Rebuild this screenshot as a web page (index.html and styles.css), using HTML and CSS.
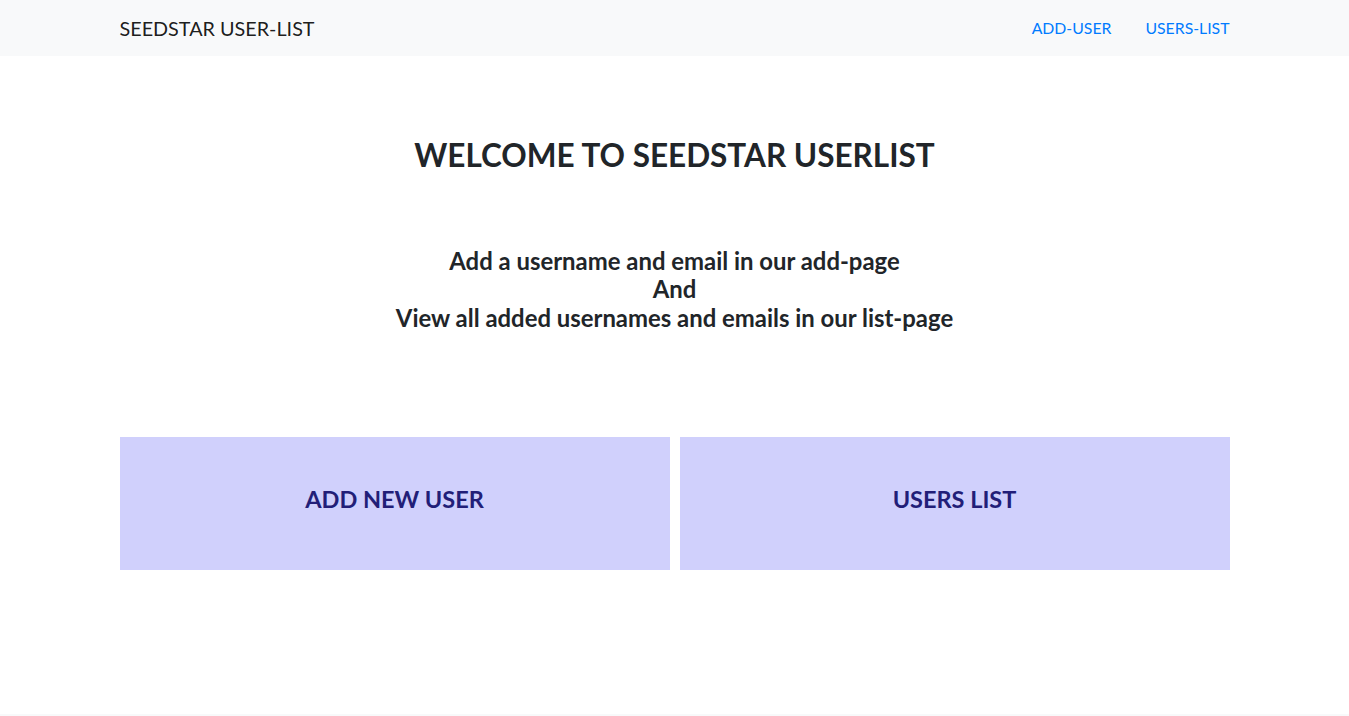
FILE: index.html
```html
<!DOCTYPE html>
<html>
<head>
<meta charset="utf-8">
<title>Seedstar User-List</title>
<link rel="stylesheet" href="styles.css">
</head>
<body>
<nav class="navbar">
  <div class="container nav-inner">
    <a class="brand" href="#">SEEDSTAR USER-LIST</a>
    <div class="nav-links">
      <a class="nav-link" href="#">ADD-USER</a>
      <a class="nav-link" href="#">USERS-LIST</a>
    </div>
  </div>
</nav>
<main class="container main">
  <h1 class="title">WELCOME TO SEEDSTAR USERLIST</h1>
  <h4 class="intro">Add a username and email in our add-page<br>And<br>View all added usernames and emails in our list-page</h4>
  <div class="cards">
    <a class="card" href="#">ADD NEW USER</a>
    <a class="card" href="#">USERS LIST</a>
  </div>
</main>
<footer class="footer"></footer>
</body>
</html>
```
FILE: styles.css
```css
* { box-sizing: border-box; }
html, body { margin: 0; padding: 0; }
body {
  font-family: Lato, "Open Sans", sans-serif;
  color: #212529;
  background: #fff;
  font-size: 16px;
  line-height: 1.5;
  min-height: 716px;
  display: flex;
  flex-direction: column;
}
a { text-decoration: none; }
.container {
  width: 1140px;
  margin: 0 auto;
  padding: 0 15px;
}
.navbar {
  background: #f8f9fa;
  height: 56px;
}
.nav-inner {
  height: 56px;
  display: flex;
  align-items: center;
  justify-content: space-between;
}
.brand {
  font-size: 19.8px;
  color: rgba(0,0,0,0.9);
  line-height: 30px;
}
.nav-links {
  display: flex;
  gap: 34px;
}
.nav-link {
  color: #007bff;
  font-size: 15.8px;
}
.main { flex: 1; }
.title {
  margin: 81px 0 0;
  text-align: center;
  font-size: 31.5px;
  font-weight: 700;
  line-height: 1.2;
}
.intro {
  margin: 72px 0 0;
  text-align: center;
  font-size: 23.9px;
  font-weight: 700;
  line-height: 28.5px;
}
.cards {
  margin-top: 105px;
  display: flex;
  gap: 10px;
}
.card {
  flex: 1;
  height: 133px;
  padding-bottom: 8px;
  background: #d0d0fc;
  color: #221e78;
  font-size: 23.5px;
  font-weight: 700;
  display: flex;
  align-items: center;
  justify-content: center;
}
.footer {
  height: 2px;
  background: #f8f9fa;
}
```
